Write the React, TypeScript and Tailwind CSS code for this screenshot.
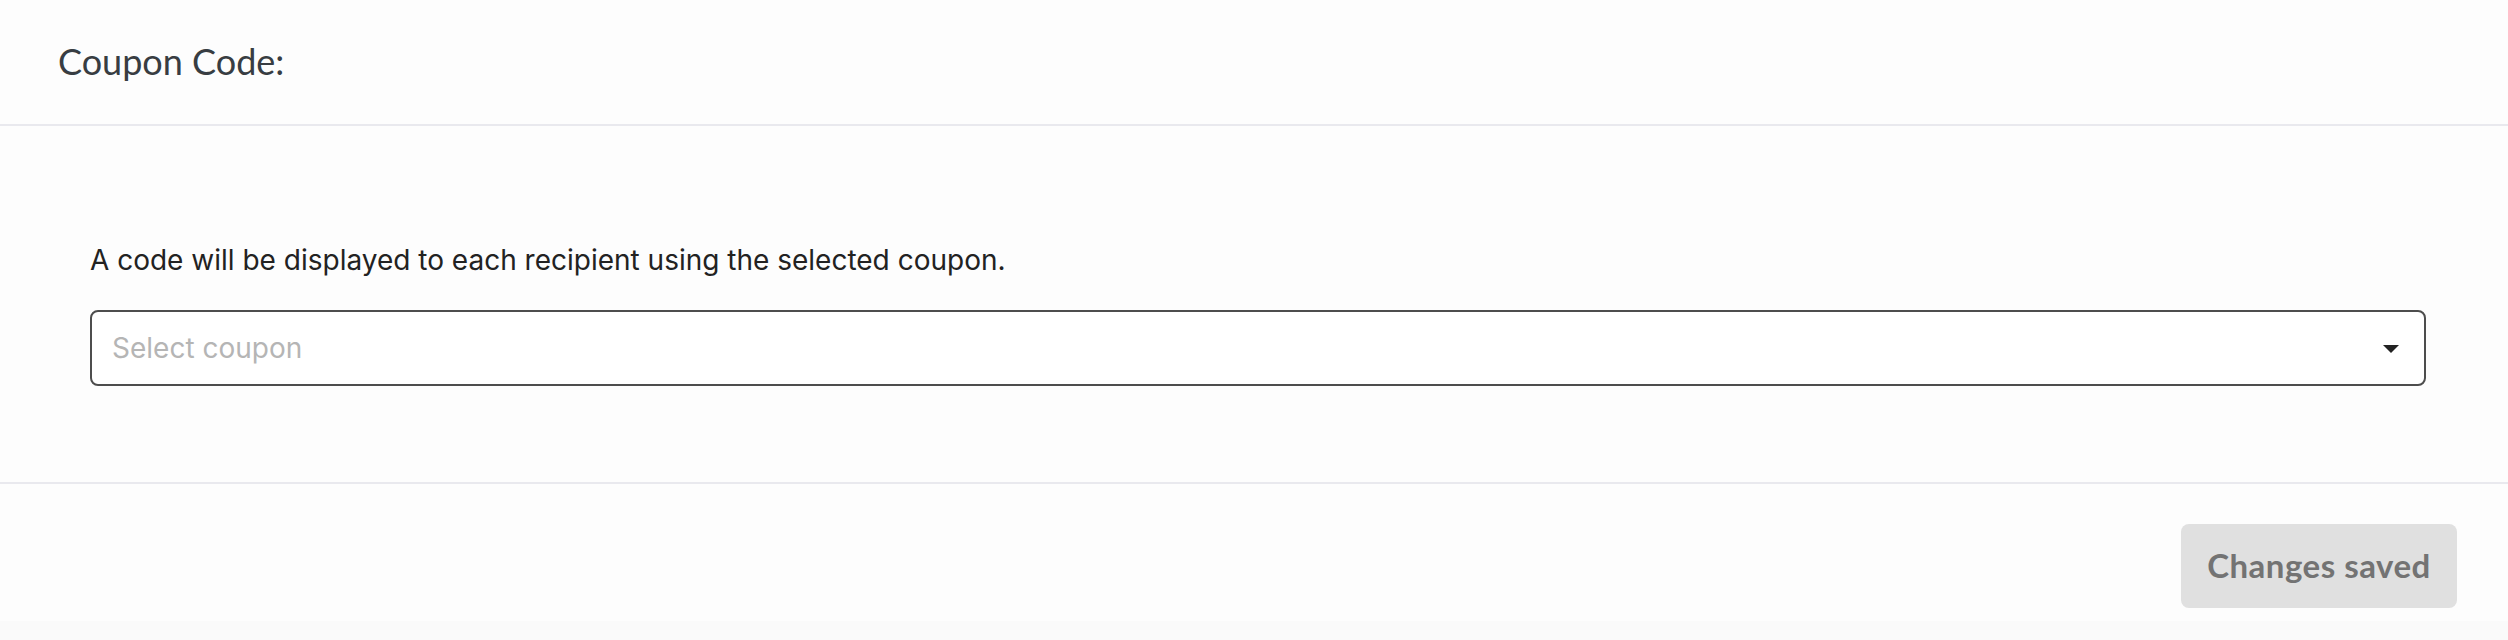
export default function App() {
  return (
    <div className="min-h-screen w-full bg-[#fafafa]">
      <div className="bg-[#fdfdfd]">
        {/* Header */}
        <header className="flex h-[126px] items-center border-b-2 border-[#e9e9ee] px-[58px]">
          <h2 className="font-['Lato',sans-serif] text-[36px] leading-none text-[#383d42] -mt-[2px]">
            Coupon Code:
          </h2>
        </header>

        {/* Body */}
        <section className="h-[358px] border-b-2 border-[#e9e9ee] pl-[90px] pr-[82px] pt-[114px]">
          <p className="font-['Inter',sans-serif] text-[28px] leading-[40px] text-[#222222]">
            A code will be displayed to each recipient using the selected coupon.
          </p>
          <button
            type="button"
            className="mt-[30px] flex h-[76px] w-full items-center justify-between rounded-[8px] border-2 border-[#4d4d4d] bg-white pl-[20px] pr-[25px]"
          >
            <span className="font-['Inter',sans-serif] text-[28px] text-[#b5b5b5]">
              Select coupon
            </span>
            <svg width="16" height="8" viewBox="0 0 16 8" className="mt-[2px]">
              <polygon points="0,0 16,0 8,8" fill="#222222" />
            </svg>
          </button>
        </section>

        {/* Footer */}
        <footer className="flex h-[137px] items-start justify-end pr-[51px] pt-[40px]">
          <button
            type="button"
            disabled
            className="flex h-[84px] w-[276px] items-center justify-center rounded-[8px] bg-[#e0e0e0] font-['Lato',sans-serif] text-[33px] font-bold tracking-[0.5px] text-[#737373]"
          >
            Changes saved
          </button>
        </footer>
      </div>
    </div>
  );
}
